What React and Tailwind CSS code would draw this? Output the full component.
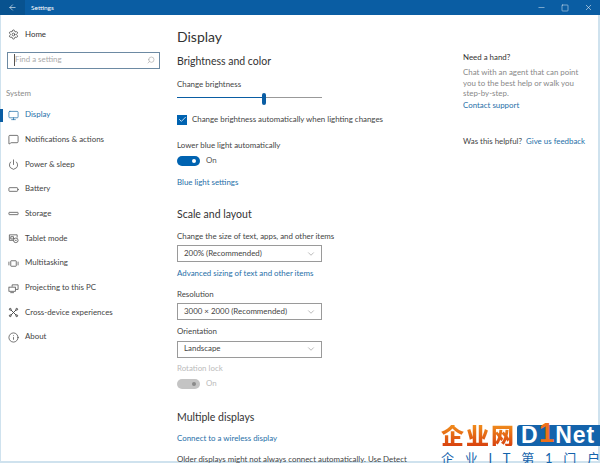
import { ArrowLeft, Check, ChevronDown, Info, MessageSquare, Minus, Monitor, Power, Search, Settings, Square, X } from "lucide-react";

const stroke = { width: 11, height: 11, viewBox: "0 0 24 24", fill: "none", stroke: "currentColor", strokeWidth: 1.6 };

function BatteryIcon() {
  return <svg {...stroke}><rect x="2" y="8" width="19" height="8" rx="1.5" /><path d="M23 11v2" /></svg>;
}
function StorageIcon() {
  return <svg {...stroke}><rect x="2" y="9.5" width="20" height="5" rx="1" /></svg>;
}
function TabletIcon() {
  return <svg {...stroke}><path d="M12 16H3V4h17v6" /><path d="M6 8h6v5H6z" /><circle cx="17" cy="16" r="5" /><path d="M15 16h4" /></svg>;
}
function MultitaskIcon() {
  return <svg {...stroke}><rect x="6" y="6" width="12" height="12" rx="1" /><path d="M2 8v8M22 8v8" /></svg>;
}
function ProjectIcon() {
  return <svg {...stroke}><path d="M9 8V4h13v10h-5" /><rect x="2" y="9" width="14" height="9" /><path d="M5 21h8" /></svg>;
}
function CrossDeviceIcon() {
  return <svg {...stroke} strokeWidth={2}><path d="M6 6l12 12M18 6L6 18" /><circle cx="5" cy="5" r="2" /><circle cx="19" cy="5" r="2" /><circle cx="5" cy="19" r="2" /><circle cx="19" cy="19" r="2" /></svg>;
}

const navItems = [
  { label: "Display", icon: <Monitor size={11} strokeWidth={1.6} />, active: true },
  { label: "Notifications & actions", icon: <MessageSquare size={11} strokeWidth={1.6} /> },
  { label: "Power & sleep", icon: <Power size={11} strokeWidth={1.6} /> },
  { label: "Battery", icon: <BatteryIcon /> },
  { label: "Storage", icon: <StorageIcon /> },
  { label: "Tablet mode", icon: <TabletIcon /> },
  { label: "Multitasking", icon: <MultitaskIcon /> },
  { label: "Projecting to this PC", icon: <ProjectIcon /> },
  { label: "Cross-device experiences", icon: <CrossDeviceIcon /> },
  { label: "About", icon: <Info size={11} strokeWidth={1.6} /> },
];

function Select({ value }) {
  return (
    <div className="flex h-[17px] w-[145px] items-center justify-between border border-[#9a9a9a] pl-[6px] pr-[5px] text-[7.9px] text-[#444]">
      <span>{value}</span>
      <ChevronDown size={10} strokeWidth={1.2} className="text-[#777]" />
    </div>
  );
}

function Toggle({ disabled }) {
  return (
    <div className="flex items-center gap-[6px]">
      <div className={`flex h-[10px] w-[23px] items-center justify-end rounded-full pr-[4px] ${disabled ? "bg-[#c4c4c4]" : "bg-[#0063b1]"}`}>
        <div className={`h-[4px] w-[4px] rounded-full ${disabled ? "bg-[#8a8a8a]" : "bg-white"}`} />
      </div>
      <span className={`text-[7.9px] ${disabled ? "text-[#bbb]" : "text-[#555]"}`}>On</span>
    </div>
  );
}

function Heading({ children, className }) {
  return <h2 className={`text-[10.5px] leading-[14px] text-[#333] ${className}`}>{children}</h2>;
}

function Label({ children, className }) {
  return <p className={`text-[7.9px] leading-[11px] text-[#444] ${className}`}>{children}</p>;
}

function Link({ children, className }) {
  return <p className={`text-[7.9px] leading-[11px] text-[#1f6fa8] ${className}`}>{children}</p>;
}

export default function App() {
  return (
    <div className="relative flex h-[463px] w-[600px] flex-col overflow-hidden bg-white font-['Lato','Noto_Sans_CJK_SC',sans-serif]">
      {/* title bar */}
      <div className="flex h-[15px] shrink-0 items-center bg-[#0a5da3] text-white">
        <div className="flex h-full w-[25px] items-center justify-center bg-[#08528f]">
          <ArrowLeft size={9} strokeWidth={1.6} />
        </div>
        <span className="ml-[6px] text-[6.5px]">Settings</span>
        <div className="ml-auto flex items-center gap-[15px] pr-[7px]">
          <Minus size={9} strokeWidth={1.2} />
          <Square size={8} strokeWidth={1.4} />
          <X size={9} strokeWidth={1.4} />
        </div>
      </div>

      <div className="flex min-h-0 flex-1 border-b-2 border-l border-r-2 border-[#cfe2ee]">
        {/* sidebar */}
        <aside className="w-[169px] shrink-0">
          <div className="mt-[14px] flex items-center gap-[6px] pl-[7px] text-[7.9px] text-[#333]">
            <Settings size={11} strokeWidth={1.5} />
            <span>Home</span>
          </div>
          <div className="ml-[6px] mt-[11px] flex h-[17px] w-[153px] items-center justify-between border border-[#6d8aa3] pl-[6px] pr-[4px] text-[7.9px] text-[#aaa]">
            <span className="border-l border-[#555]">Find a setting</span>
            <Search size={8} className="scale-x-[-1]" />
          </div>
          <p className="ml-[5px] mt-[19px] text-[7.9px] leading-[11px] text-[#8a8a8a]">System</p>
          <nav className="mt-[4px]">
            {navItems.map((item) => (
              <div
                key={item.label}
                className={`relative flex h-[24.7px] items-center gap-[6px] pl-[7px] text-[7.9px] ${item.active ? "text-[#1f6fa8]" : "text-[#444]"}`}
              >
                {item.active && <div className="absolute -left-px top-[6px] h-[13px] w-[3px] bg-[#0a5da3]" />}
                {item.icon}
                <span>{item.label}</span>
              </div>
            ))}
          </nav>
        </aside>

        {/* main column */}
        <main className="w-[267px] shrink-0 pl-[7px]">
          <h1 className="mt-[13px] text-[14px] leading-[18px] text-[#333]">Display</h1>
          <Heading className="mt-[8px]">Brightness and color</Heading>
          <Label className="mt-[11px]">Change brightness</Label>
          <div className="relative mt-[3px] h-[9px] w-[145px]">
            <div className="absolute left-0 top-[4px] h-px w-full bg-[#999]" />
            <div className="absolute left-0 top-[4px] h-px w-[86px] bg-[#0a5da3]" />
            <div className="absolute left-[85px] top-0 h-[12px] w-[4px] rounded-sm bg-[#0a5da3]" />
          </div>
          <div className="mt-[12px] flex items-center gap-[5px]">
            <div className="flex h-[10px] w-[10px] items-center justify-center bg-[#0063b1] text-white">
              <Check size={9} strokeWidth={2} />
            </div>
            <Label>Change brightness automatically when lighting changes</Label>
          </div>
          <Label className="mt-[15px]">Lower blue light automatically</Label>
          <div className="mt-[4px]"><Toggle /></div>
          <Link className="mt-[10px]">Blue light settings</Link>

          <Heading className="mt-[19px]">Scale and layout</Heading>
          <Label className="mt-[10px]">Change the size of text, apps, and other items</Label>
          <div className="mt-[3.5px]"><Select value="200% (Recommended)" /></div>
          <Link className="mt-[5.5px]">Advanced sizing of text and other items</Link>
          <Label className="mt-[10px]">Resolution</Label>
          <div className="mt-[3.5px]"><Select value="3000 × 2000 (Recommended)" /></div>
          <Label className="mt-[5.5px]">Orientation</Label>
          <div className="mt-[4px]"><Select value="Landscape" /></div>
          <p className="mt-[5px] text-[7.9px] leading-[11px] text-[#bbb]">Rotation lock</p>
          <div className="mt-[4px]"><Toggle disabled /></div>
          <Heading className="mt-[20px]">Multiple displays</Heading>
          <Link className="mt-[9px]">Connect to a wireless display</Link>
          <p className="mt-[10px] whitespace-nowrap text-[7.9px] leading-[11px] text-[#444]">Older displays might not always connect automatically. Use Detect</p>
        </main>

        {/* help column */}
        <section className="pl-[26px]">
          <p className="mt-[37px] text-[7.9px] leading-[11px] text-[#333]">Need a hand?</p>
          <p className="mt-[4px] w-[125px] text-[7.9px] leading-[10.5px] text-[#888]">Chat with an agent that can point you to the best help or walk you step-by-step.</p>
          <Link className="mt-[1px]">Contact support</Link>
          <p className="mt-[25px] text-[7.9px] leading-[11px] text-[#444]">
            Was this helpful? <span className="ml-[2px] text-[#1f6fa8]">Give us feedback</span>
          </p>
        </section>
      </div>

      {/* watermark */}
      <div className="absolute left-[441px] top-[425px] w-[159px]">
        <div className="flex h-[21px] items-stretch">
          <span className="flex w-[75px] items-center justify-center bg-[linear-gradient(#f08c1c,#d8420e)] bg-clip-text text-[23px] font-black leading-[21px] tracking-[2px] text-transparent">企业网</span>
          <span className="ml-[1px] flex flex-1 items-center rounded-l-[3px] bg-[#1463ab] pl-[4px] font-['Liberation_Sans',sans-serif] text-[23px] font-bold leading-[21px] tracking-[1px] text-white">
            D<span className="-mt-[6px] text-[28px] text-[#f0701a]">1</span>Net
          </span>
        </div>
        <div className="mt-[6px] flex justify-between text-[13px] leading-[13px] text-[#1463ab]">
          {["企", "业", "I", "T", "第", "1", "门", "户"].map((c, i) => <span key={i}>{c}</span>)}
        </div>
      </div>
    </div>
  );
}
